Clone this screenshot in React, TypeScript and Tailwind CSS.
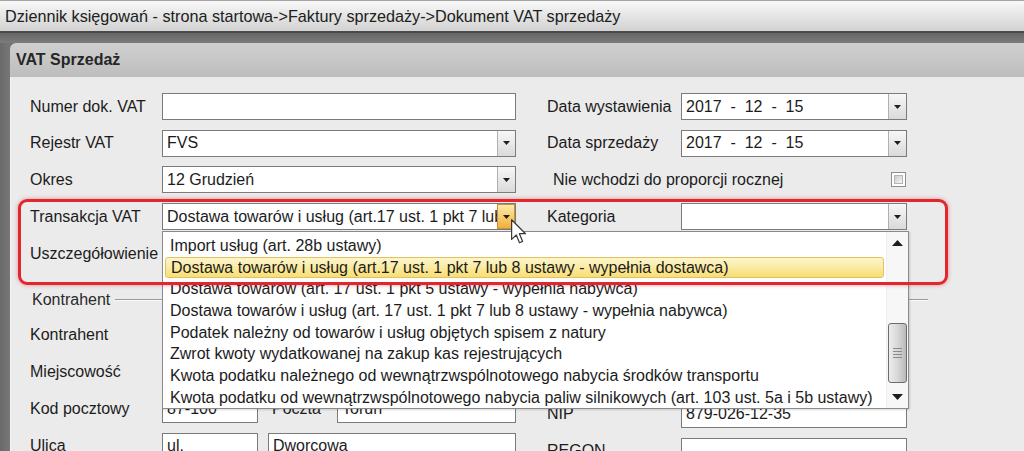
import React from "react";

function Arrow() {
  return (
    <svg width="7" height="4" viewBox="0 0 7 4">
      <path d="M0 0H7L3.5 4Z" fill="#1f1f1f" />
    </svg>
  );
}

function Box({
  className = "",
  value = "",
  drop = false,
  hover = false,
}: {
  className?: string;
  value?: string;
  drop?: boolean;
  hover?: boolean;
}) {
  return (
    <div className={"h-[27px] shrink-0 border border-[#7b7b7b] bg-white flex " + className}>
      <div className="flex-1 flex items-center overflow-hidden whitespace-pre pl-[4px]">{value}</div>
      {drop &&
        (hover ? (
          <div className="w-[18px] border border-[#c4943a] bg-gradient-to-b from-[#fde9ad] via-[#f9cd6d] to-[#f3ae3c] flex items-center justify-center">
            <Arrow />
          </div>
        ) : (
          <div className="w-[18px] border-l border-[#b0b0b0] bg-gradient-to-b from-[#f7f7f7] to-[#dadada] flex items-center justify-center">
            <Arrow />
          </div>
        ))}
    </div>
  );
}

function Label({ children, className = "w-[132px]" }: { children?: React.ReactNode; className?: string }) {
  return <div className={"shrink-0 whitespace-nowrap " + className}>{children}</div>;
}

const items = [
  "Import usług (art. 28b ustawy)",
  "Dostawa towarów i usług (art.17 ust. 1 pkt 7 lub 8 ustawy - wypełnia dostawca)",
  "Dostawa towarów (art. 17 ust. 1 pkt 5 ustawy - wypełnia nabywca)",
  "Dostawa towarów i usług (art. 17 ust. 1 pkt 7 lub 8 ustawy - wypełnia nabywca)",
  "Podatek należny od towarów i usług objętych spisem z natury",
  "Zwrot kwoty wydatkowanej na zakup kas rejestrujących",
  "Kwota podatku należnego od wewnątrzwspólnotowego nabycia środków transportu",
  "Kwota podatku od wewnątrzwspólnotowego nabycia paliw silnikowych (art. 103 ust. 5a i 5b ustawy)",
];

export default function App() {
  return (
    <div className="relative w-[1024px] h-[451px] overflow-hidden flex flex-col bg-[#ebebeb] text-[16px] text-[#1c1c1c] font-[family-name:'Liberation_Sans',Arial,sans-serif]">
      {/* Title bar */}
      <div className="h-[31px] shrink-0 border-t border-[#a5a5a5] bg-gradient-to-b from-[#f8f8f8] to-[#d2d2d2] flex items-center pl-[5px] text-[16.2px] text-[#202020]">
        Dziennik księgowań - strona startowa-&gt;Faktury sprzedaży-&gt;Dokument VAT sprzedaży
      </div>
      {/* dark band */}
      <div className="h-[12px] shrink-0 border-t-[2px] border-[#4a4a4a] bg-gradient-to-b from-[#666666] to-[#7c7c7c]" />
      <div className="flex-1 flex min-h-0">
        <div className="w-[10px] shrink-0 bg-gradient-to-r from-[#6a6a6a] to-[#777777]" />
        <div className="flex-1 flex flex-col bg-[#6f6f6f]">
          <div className="h-[34px] shrink-0 rounded-tl-[6px] bg-gradient-to-b from-[#d0d0d0] to-[#bdbdbd] flex items-center pl-[6px] font-bold text-[#262626]">
            VAT Sprzedaż
          </div>
          <div className="flex-1 bg-[#ebebeb] border-l border-[#f4f4f4] pl-[19px] pt-[16px] flex flex-col">
            {/* Top rows */}
            <div className="flex flex-col gap-[9.7px]">
              <div className="flex h-[27px] items-center">
                <Label>Numer dok. VAT</Label>
                <Box className="w-[354px]" />
                <Label className="w-[134px] ml-[31px]">Data wystawienia</Label>
                <Box className="w-[226px]" value="2017  -  12  -  15" drop />
              </div>
              <div className="flex h-[27px] items-center">
                <Label>Rejestr VAT</Label>
                <Box className="w-[354px]" value="FVS" drop />
                <Label className="w-[134px] ml-[31px]">Data sprzedaży</Label>
                <Box className="w-[226px]" value="2017  -  12  -  15" drop />
              </div>
              <div className="flex h-[27px] items-center">
                <Label>Okres</Label>
                <Box className="w-[354px]" value="12 Grudzień" drop />
                <div className="ml-[31px] w-[360px] flex items-center justify-between pl-[6px] pr-[1px]">
                  <span className="whitespace-nowrap">Nie wchodzi do proporcji rocznej</span>
                  <div className="w-[15px] h-[15px] border border-[#8e8e8e] bg-white p-[2px]">
                    <div className="w-full h-full border border-[#b5b5b5] bg-gradient-to-br from-[#cdcdcd] to-[#f5f5f5]" />
                  </div>
                </div>
              </div>
              <div className="flex h-[27px] items-center">
                <Label>Transakcja VAT</Label>
                <Box
                  className="w-[354px]"
                  value="Dostawa towarów i usług (art.17 ust. 1 pkt 7 lub 8 ustawy - wypełnia dostawca)"
                  drop
                  hover
                />
                <Label className="w-[134px] ml-[31px]">Kategoria</Label>
                <Box className="w-[226px]" drop />
              </div>
              <div className="flex h-[27px] items-center mt-[1px]">
                <Label>Uszczegółowienie</Label>
                <Box className="w-[354px]" drop />
              </div>
            </div>
            {/* Group Kontrahent */}
            <div className="mt-[23px] h-[18px] w-[898px] flex items-center pl-[2px] text-[#2a2a2a]">
              <span>Kontrahent</span>
              <div className="flex-1 ml-[5px] h-[2px] border-t border-[#9a9a9a] border-b border-b-[#fafafa]" />
            </div>
            <div className="flex mt-[13px]">
              <div className="flex flex-col gap-[10px]">
                <div className="flex h-[27px] items-center">
                  <Label>Kontrahent</Label>
                  <Box className="w-[354px]" drop />
                </div>
                <div className="flex h-[27px] items-center">
                  <Label>Miejscowość</Label>
                  <Box className="w-[354px]" />
                </div>
                <div className="flex h-[27px] items-center">
                  <Label>Kod pocztowy</Label>
                  <Box className="w-[96px]" value="87-100" />
                  <Label className="w-[79px] pl-[14px]">Poczta</Label>
                  <Box className="w-[179px]" value="Toruń" />
                </div>
                <div className="flex h-[27px] items-center">
                  <Label>Ulica</Label>
                  <Box className="w-[96px]" value="ul." />
                  <Box className="w-[248px] ml-[10px]" value="Dworcowa" />
                </div>
              </div>
              <div className="flex flex-col gap-[10px] ml-[31px] mt-[5px]">
                <div className="flex h-[27px] items-center">
                  <Label className="w-[134px]" />
                  <Box className="w-[226px]" />
                </div>
                <div className="flex h-[27px] items-center">
                  <Label className="w-[134px]" />
                  <Box className="w-[226px]" />
                </div>
                <div className="flex h-[27px] items-center">
                  <Label className="w-[134px]">NIP</Label>
                  <Box className="w-[226px]" value="879-026-12-35" />
                </div>
                <div className="flex h-[27px] items-center">
                  <Label className="w-[134px]">REGON</Label>
                  <Box className="w-[226px]" />
                </div>
              </div>
            </div>
          </div>
        </div>
      </div>

      {/* Dropdown list overlay */}
      <div className="absolute left-[162px] top-[231px] w-[747px] h-[178px] border border-[#8a8a8a] bg-white flex shadow-[1px_1px_2px_rgba(0,0,0,0.15)]">
        <div className="flex-1 flex flex-col pt-[3px] pr-[2px]">
          {items.map((t, i) =>
            i === 1 ? (
              <div
                key={i}
                className="h-[21.7px] ml-[2px] pl-[5px] flex items-center whitespace-nowrap rounded-[3px] border border-[#e2c25e] bg-gradient-to-b from-[#fdf6cc] to-[#f8de72]"
              >
                {t}
              </div>
            ) : (
              <div key={i} className="h-[21.7px] pl-[7px] flex items-center whitespace-nowrap">
                {t}
              </div>
            )
          )}
        </div>
        <div className="w-[22px] shrink-0 bg-[#f7f7f7] border-l border-[#f0f0f0] flex flex-col items-center">
          <div className="h-[22px] flex items-center justify-center">
            <svg width="11" height="6" viewBox="0 0 11 6">
              <path d="M5.5 0L11 6H0Z" fill="#1e1e1e" />
            </svg>
          </div>
          <div className="flex-1 flex flex-col items-center">
            <div className="mt-[69px] w-[19px] h-[60px] rounded-[3px] border border-[#6c6c6c] bg-gradient-to-r from-[#ececec] via-[#d8d8d8] to-[#b9b9b9] flex flex-col items-center justify-center gap-[2px]">
              <div className="w-[9px] h-px bg-[#8a8a8a]" />
              <div className="w-[9px] h-px bg-[#8a8a8a]" />
              <div className="w-[9px] h-px bg-[#8a8a8a]" />
              <div className="w-[9px] h-px bg-[#8a8a8a]" />
            </div>
          </div>
          <div className="h-[22px] flex items-center justify-center">
            <svg width="11" height="6" viewBox="0 0 11 6">
              <path d="M0 0H11L5.5 6Z" fill="#1e1e1e" />
            </svg>
          </div>
        </div>
      </div>

      {/* Red highlight */}
      <div className="absolute left-[18px] top-[199px] w-[930px] h-[86px] rounded-[9px] border-[3px] border-[#e2262e] shadow-[0_0_4px_rgba(210,30,40,0.45)]" />

      {/* Cursor */}
      <svg className="absolute left-[511px] top-[219px]" width="16" height="26" viewBox="0 0 13 21">
        <path
          d="M0.5 0.5 L0.5 16.5 L4.3 12.9 L6.9 19.2 L9.4 18.1 L6.8 11.9 L11.8 11.9 Z"
          fill="#ffffff"
          stroke="#3a3a3a"
          strokeWidth="1"
          strokeLinejoin="round"
        />
      </svg>
    </div>
  );
}
